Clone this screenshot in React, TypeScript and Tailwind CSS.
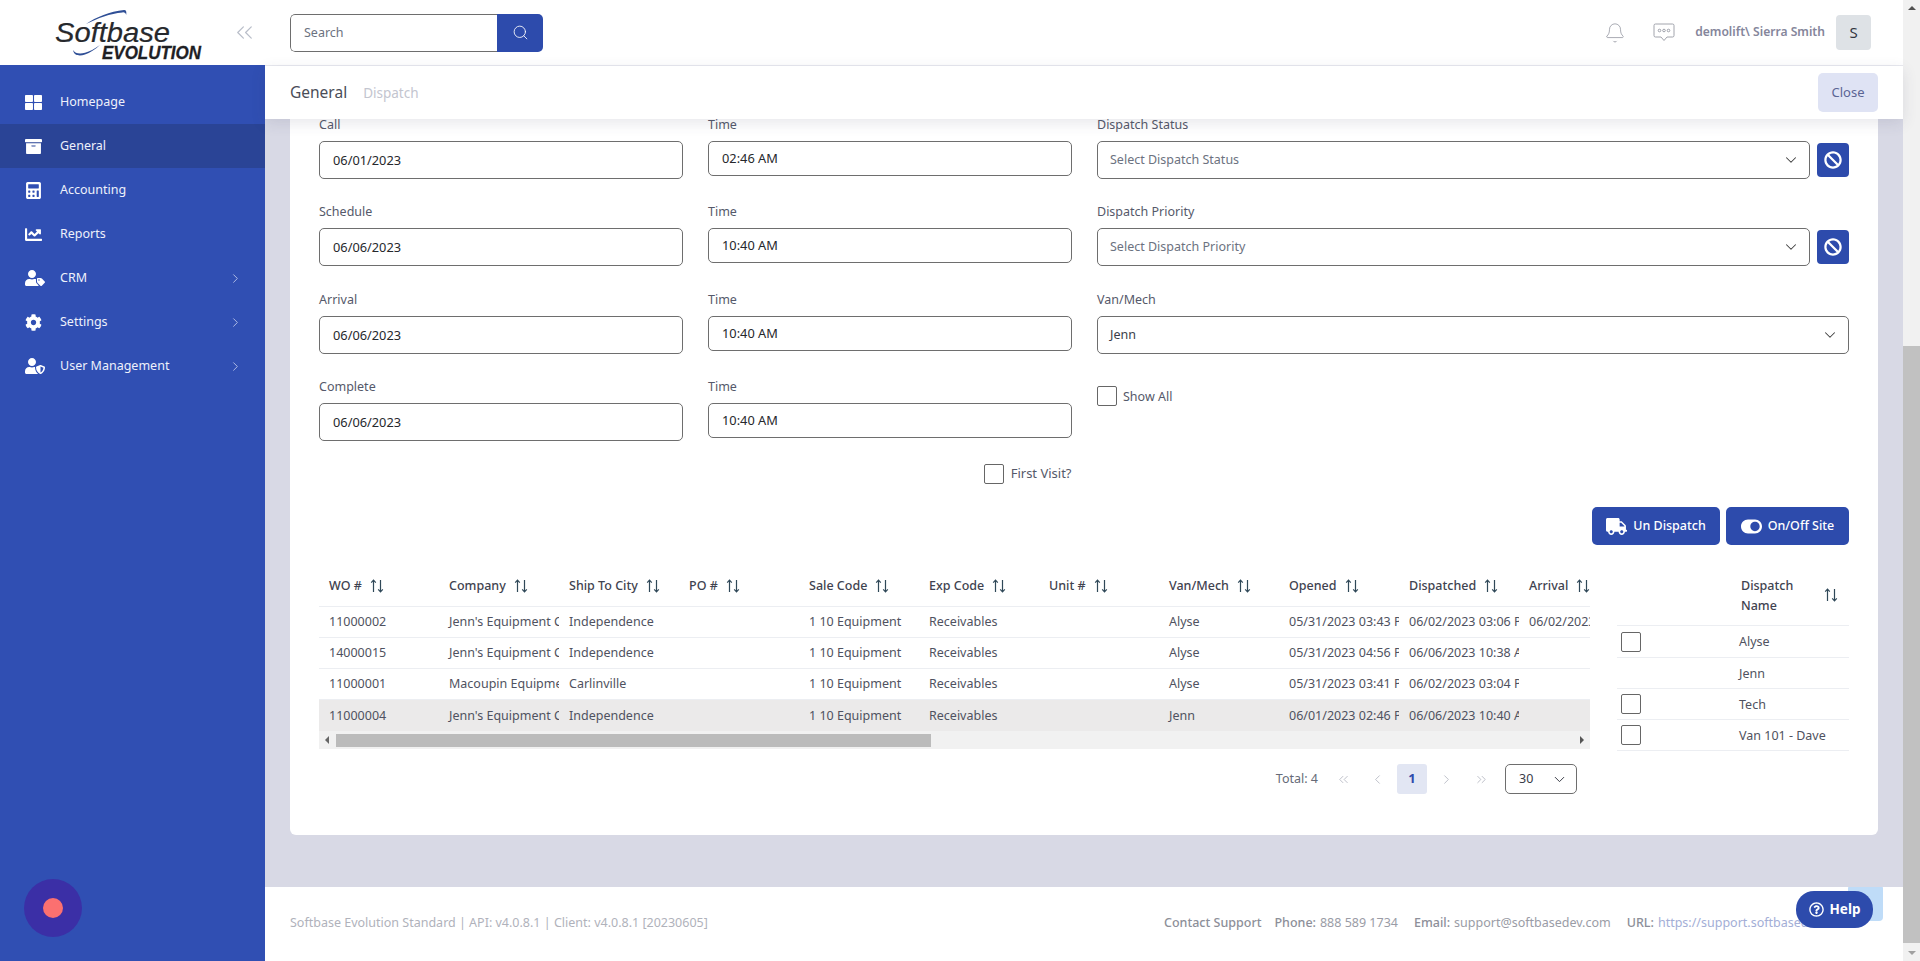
import { ChevronDown, ChevronLeft, ChevronRight, ChevronsLeft, ChevronsRight, Search, Bell } from "lucide-react";
import { FaArchive, FaBan, FaCalculator, FaChartLine, FaCog, FaRegQuestionCircle, FaThLarge, FaToggleOn, FaTruck, FaUserShield, FaUserTag } from "react-icons/fa";

const nav = [
  { label: "Homepage", icon: FaThLarge, size: 17 },
  { label: "General", icon: FaArchive, size: 17 },
  { label: "Accounting", icon: FaCalculator, size: 17 },
  { label: "Reports", icon: FaChartLine, size: 17 },
  { label: "CRM", icon: FaUserTag, size: 20, more: true },
  { label: "Settings", icon: FaCog, size: 17, more: true },
  { label: "User Management", icon: FaUserShield, size: 20, more: true },
];

const columns = ["WO #", "Company", "Ship To City", "PO #", "Sale Code", "Exp Code", "Unit #", "Van/Mech", "Opened", "Dispatched", "Arrival"];

const rows = [
  ["11000002", "Jenn's Equipment Company", "Independence", "", "1 10 Equipment", "Receivables", "", "Alyse", "05/31/2023 03:43 PM", "06/02/2023 03:06 PM", "06/02/2023 03:06 PM"],
  ["14000015", "Jenn's Equipment Company", "Independence", "", "1 10 Equipment", "Receivables", "", "Alyse", "05/31/2023 04:56 PM", "06/06/2023 10:38 AM", ""],
  ["11000001", "Macoupin Equipment", "Carlinville", "", "1 10 Equipment", "Receivables", "", "Alyse", "05/31/2023 03:41 PM", "06/02/2023 03:04 PM", ""],
  ["11000004", "Jenn's Equipment Company", "Independence", "", "1 10 Equipment", "Receivables", "", "Jenn", "06/01/2023 02:46 PM", "06/06/2023 10:40 AM", ""],
];

const dispatchers = [
  { name: "Alyse", check: true, h: "h-[32px]" },
  { name: "Jenn", check: false, h: "h-[31px]" },
  { name: "Tech", check: true, h: "h-[31px]" },
  { name: "Van 101 - Dave", check: true, h: "h-[31px]" },
];

function SortIcon() {
  return (
    <svg width="14" height="14" viewBox="0 0 14 14" fill="none" stroke="#2f4858" strokeWidth="1.2" className="shrink-0">
      <path d="M3.5 13V1.2M1.2 3.6l2.3-2.4 2.3 2.4" />
      <path d="M10.5 1v11.8M8.2 10.4l2.3 2.4 2.3-2.4" />
    </svg>
  );
}

function Logo() {
  return (
    <svg width="150" height="52" viewBox="0 0 150 52" className="shrink-0">
      <path d="M31 15C41 8 55 2.500 69 1c2-.2 2.800 1.500 2.200 5-.5-2-1.700-2.800-3.700-2.600C55 4.500 43 9 31 15z" fill="#2f4f96" />
      <path d="M18 41c1 5.500 6 6.500 12 4.500 5-1.700 10-5 15-9.500-6 4-10 6.500-15 7.800-5.500 1.400-10 .7-12-2.800z" fill="#2f4f96" />
      <text x="0" y="33" fontFamily="'Liberation Sans', sans-serif" fontStyle="italic" fontSize="27" textLength="115" lengthAdjust="spacingAndGlyphs" stroke="#26282c" strokeWidth="0.2" fill="#26282c">Softbase</text>
      <text x="47" y="50" fontFamily="'Liberation Sans', sans-serif" fontStyle="italic" fontWeight="700" fontSize="18" textLength="99" lengthAdjust="spacingAndGlyphs" stroke="#1e2024" strokeWidth="0.3" fill="#1e2024">EVOLUTION</text>
    </svg>
  );
}

function Label({ text }: { text: string }) {
  return <div className="h-[26px] pt-[1px] leading-[18px] text-[#55596a]">{text}</div>;
}

function Field({ label, value, tall }: { label: string; value: string; tall?: boolean }) {
  return (
    <div>
      <Label text={label} />
      <div className={`flex items-center rounded-[5px] border border-[#6e6e6e] bg-white pl-[13px] text-[12.800px] text-[#26282c] ${tall ? "h-[38px] pt-[1px]" : "h-[35px]"}`}>
        {value}
      </div>
    </div>
  );
}

function SelectBox({ value, muted }: { value: string; muted?: boolean }) {
  return (
    <div className={`flex h-[38px] flex-1 items-center justify-between rounded-[5px] border border-[#6e6e6e] bg-white pl-[12px] pr-[9px] ${muted ? "text-[#6c7280]" : "text-[#3a3d48]"}`}>
      <span>{value}</span>
      <ChevronDown size={18} strokeWidth={1.4} className="text-[#3d3d3d]" />
    </div>
  );
}

function StatusField({ label, value }: { label: string; value: string }) {
  return (
    <div>
      <Label text={label} />
      <div className="flex items-center gap-[7px]">
        <SelectBox value={value} muted />
        <button type="button" className="flex h-[34px] w-[32px] items-center justify-center rounded-[4px] bg-[#2d4bac] text-white">
          <FaBan size={18} />
        </button>
      </div>
    </div>
  );
}

function Checkbox() {
  return <span className="block h-[20px] w-[20px] shrink-0 rounded-[2px] border border-[#666] bg-white" />;
}

export default function App() {
  return (
    <div className="flex h-[961px] w-[1920px] overflow-hidden bg-white font-['Noto_Sans',sans-serif] text-[12.500px]">
      <aside className="flex w-[265px] shrink-0 flex-col">
        <div className="relative z-10 flex h-[65px] items-center pl-[55px] pr-[7px] pt-[5px]">
          <Logo />
          <ChevronsLeft size={27} strokeWidth={1.1} className="ml-auto mb-[6px] text-[#b9bec9]" />
        </div>
        <nav className="relative flex-1 bg-[#304fb3] pt-[15px] text-white">
          {nav.map((n) => (
            <div key={n.label} className={`flex h-[44px] items-center pl-[25px] pr-[22px] ${n.label === "General" ? "bg-[#2a4496]" : ""}`}>
              <span className="flex w-[35px] shrink-0">
                <n.icon size={n.size} />
              </span>
              <span className="text-[#eef1fb]">{n.label}</span>
              {n.more && <ChevronRight size={15} strokeWidth={1.5} className="ml-auto text-[#b4c0e8]" />}
            </div>
          ))}
          <div className="absolute bottom-[24px] left-[24px] flex h-[58px] w-[58px] items-center justify-center rounded-full bg-[#3b2fa6]">
            <span className="h-[20px] w-[20px] rounded-full bg-[#fb7070]" />
          </div>
        </nav>
      </aside>

      <div className="flex min-w-0 flex-1 flex-col bg-[#d8d9e5]">
        <header className="flex h-[66px] shrink-0 items-center border-b border-[#e8e9ef] bg-white pl-[25px] pr-[32px]">
          <div className="flex h-[38px] w-[253px] overflow-hidden rounded-[5px]">
            <div className="flex flex-1 items-center rounded-l-[5px] border border-r-0 border-[#6e6e6e] pl-[13px] pt-[1px] text-[#6c7280]">Search</div>
            <div className="flex w-[46px] items-center justify-center bg-[#2d4bac] text-white">
              <Search size={17} strokeWidth={1.2} />
            </div>
          </div>
          <Bell size={22} strokeWidth={0.8} className="ml-auto text-[#8a8d98]" />
          <svg width="22" height="19" viewBox="0 0 22 19" fill="none" stroke="#8a8d98" strokeWidth="0.8" className="ml-[27px]">
            <path d="M2.500 1h17a1.500 1.500 0 0 1 1.500 1.500v10a1.500 1.500 0 0 1-1.500 1.500h-5.500l-3 3.500-3-3.500h-5.500a1.500 1.500 0 0 1-1.500-1.500v-10a1.500 1.500 0 0 1 1.500-1.500z" />
            <circle cx="6.500" cy="7.500" r="1.300" />
            <circle cx="11" cy="7.500" r="1.300" />
            <circle cx="15.500" cy="7.500" r="1.300" />
          </svg>
          <span className="ml-[20px] text-[12.100px] font-semibold text-[#85869b]">demolift\ Sierra Smith</span>
          <div className="ml-[11px] flex h-[35px] w-[35px] items-center justify-center rounded-[4px] bg-[#dee2e6] text-[15px] text-[#33363f]">S</div>
        </header>

        <div className="relative z-10 flex h-[53px] shrink-0 items-center justify-between bg-white pl-[25px] pr-[25px] shadow-[0_4px_14px_rgba(60,60,90,0.12)]">
          <div className="flex items-baseline gap-[16px]">
            <span className="text-[15.500px] text-[#4a4d58]">General</span>
            <span className="text-[13.500px] text-[#c3c5cf]">Dispatch</span>
          </div>
          <button type="button" className="h-[39px] w-[60px] rounded-[5px] bg-[#dfe3f4] text-[13px] text-[#5b6594]">Close</button>
        </div>

        <div className="min-h-0 flex-1 overflow-hidden px-[25px]">
          <div className="-mt-[4px] rounded-b-[6px] bg-white pb-[41px] pl-[29px] pr-[29px]">
            <div className="grid grid-cols-[364px_364px_1fr] grid-rows-[87px_88px_87px_88px] gap-x-[25px]">
              <Field label="Call" value="06/01/2023" tall />
              <Field label="Time" value="02:46 AM" />
              <StatusField label="Dispatch Status" value="Select Dispatch Status" />
              <Field label="Schedule" value="06/06/2023" tall />
              <Field label="Time" value="10:40 AM" />
              <StatusField label="Dispatch Priority" value="Select Dispatch Priority" />
              <Field label="Arrival" value="06/06/2023" tall />
              <Field label="Time" value="10:40 AM" />
              <div>
                <Label text="Van/Mech" />
                <div className="flex"><SelectBox value="Jenn" /></div>
              </div>
              <Field label="Complete" value="06/06/2023" tall />
              <Field label="Time" value="10:40 AM" />
              <div className="flex items-start gap-[6px] pt-[9px]">
                <Checkbox />
                <span className="leading-[21px] text-[#55596a]">Show All</span>
              </div>
            </div>

            <div className="-mt-[2px] flex h-[22px] w-[752.500px] items-center justify-end gap-[7px] text-[13px] text-[#55596a]">
              <Checkbox />
              <span>First Visit?</span>
            </div>

            <div className="mt-[22px] flex justify-end gap-[6px] font-medium text-white">
              <button type="button" className="flex h-[38px] w-[128px] items-center justify-center gap-[6px] rounded-[5px] bg-[#2d4bac]">
                <FaTruck size={21} />
                <span>Un Dispatch</span>
              </button>
              <button type="button" className="flex h-[38px] w-[123px] items-center justify-center gap-[6px] rounded-[5px] bg-[#2d4bac]">
                <FaToggleOn size={21} />
                <span>On/Off Site</span>
              </button>
            </div>

            <div className="mt-[20px] flex">
              <div className="w-[1271px] shrink-0">
                <div className="overflow-hidden">
                  <div className="flex h-[42px] w-max items-start border-b border-[#eceef2]">
                    {columns.map((c) => (
                      <div key={c} className="flex h-[42px] w-[120px] shrink-0 items-center gap-[8px] pl-[10px] font-medium text-[#3f4350]">
                        <span className="whitespace-nowrap">{c}</span>
                        <SortIcon />
                      </div>
                    ))}
                  </div>
                  {rows.map((r, i) => (
                    <div key={r[0]} className={`flex h-[31px] w-max items-center ${i === 3 ? "bg-[#ebeaea]" : "border-b border-[#eceef2]"}`}>
                      {r.map((v, j) => (
                        <div key={j} className="w-[120px] shrink-0 overflow-hidden whitespace-nowrap pl-[10px] pr-[2px] pt-[1px] text-[#4f5260]">
                          {v}
                        </div>
                      ))}
                    </div>
                  ))}
                </div>
                <div className="flex h-[18px] items-center bg-[#f1f1f1] text-[#555]">
                  <span className="ml-[6px] h-0 w-0 border-y-[4px] border-r-[4px] border-y-transparent border-r-[#666]" />
                  <span className="ml-[7px] h-[13px] w-[595px] bg-[#bbbbbb]" />
                  <span className="ml-auto mr-[6px] h-0 w-0 border-y-[4px] border-l-[4px] border-y-transparent border-l-[#555]" />
                </div>
                <div className="mt-[15px] flex items-center justify-end pr-[13px] text-[#666b78]">
                  <span className="mr-[10px]">Total: 4</span>
                  <div className="flex items-center gap-[4.500px]">
                    <span className="flex h-[30px] w-[30px] items-center justify-center text-[#a9acb8]"><ChevronsLeft size={15} strokeWidth={1.2} /></span>
                    <span className="flex h-[30px] w-[30px] items-center justify-center text-[#a9acb8]"><ChevronLeft size={15} strokeWidth={1.2} /></span>
                    <span className="flex h-[30px] w-[30px] items-center justify-center rounded-[3px] bg-[#e2e6f3] text-[13px] font-bold text-[#2d4bac]">1</span>
                    <span className="flex h-[30px] w-[30px] items-center justify-center text-[#a9acb8]"><ChevronRight size={15} strokeWidth={1.2} /></span>
                    <span className="flex h-[30px] w-[30px] items-center justify-center text-[#a9acb8]"><ChevronsRight size={15} strokeWidth={1.2} /></span>
                  </div>
                  <div className="ml-[9px] flex h-[30px] w-[72px] items-center justify-between rounded-[5px] border border-[#6e6e6e] pl-[13px] pr-[8px] text-[#3a3d48]">
                    <span>30</span>
                    <ChevronDown size={17} strokeWidth={1.4} />
                  </div>
                </div>
              </div>

              <div className="ml-[27px] flex-1">
                <div className="flex h-[61px] items-center border-b border-[#eceef2] pl-[124px] pr-[11px] font-medium text-[#3f4350]">
                  <div className="flex-1 pt-[2px] leading-[20px]">Dispatch<br />Name</div>
                  <SortIcon />
                </div>
                {dispatchers.map((d) => (
                  <div key={d.name} className={`flex items-center border-b border-[#eceef2] pl-[4px] text-[#4f5260] ${d.h}`}>
                    <div className="w-[118px]">{d.check && <Checkbox />}</div>
                    <span className="pt-[2px]">{d.name}</span>
                  </div>
                ))}
              </div>
            </div>
          </div>
        </div>

        <footer className="relative flex h-[74px] shrink-0 items-center justify-between overflow-hidden bg-white pb-[2px] pl-[25px] text-[#b0b2bb]">
          <span>Softbase Evolution Standard | API: v4.0.8.1 | Client: v4.0.8.1 [20230605]</span>
          <div className="absolute left-[899px] flex items-center whitespace-nowrap text-[#8d8f99]">
            <span className="font-medium">Contact Support</span>
            <span className="ml-[13px] font-medium">Phone:</span>
            <span className="ml-[4px] font-normal text-[#9a9ca6]">888 589 1734</span>
            <span className="ml-[16px] font-medium">Email:</span>
            <span className="ml-[4px] text-[#9a9ca6]">support@softbasedev.com</span>
            <span className="ml-[16px] font-medium">URL:</span>
            <span className="ml-[4px] text-[#a3aed6]">https://support.softbasedev.com</span>
          </div>
          <div className="absolute left-[1583px] top-[-2px] h-[36px] w-[35px] rounded-[4px] bg-[#bfdcf8]" />
          <button type="button" className="absolute left-[1531px] top-[4px] flex h-[37px] w-[77px] items-center justify-center gap-[6px] rounded-[18px] bg-[#2d4bac] text-[13.500px] font-bold text-white">
            <FaRegQuestionCircle size={15} />
            <span>Help</span>
          </button>
        </footer>
      </div>

      <div className="flex w-[17px] shrink-0 flex-col items-center bg-[#f1f1f1]">
        <span className="mt-[6px] h-0 w-0 border-x-[4px] border-b-[4px] border-x-transparent border-b-[#505050]" />
        <span className="mt-[336px] h-[597px] w-full bg-[#c1c1c1]" />
        <span className="mt-[8px] h-0 w-0 border-x-[4px] border-t-[4px] border-x-transparent border-t-[#a0a0a0]" />
      </div>
    </div>
  );
}
